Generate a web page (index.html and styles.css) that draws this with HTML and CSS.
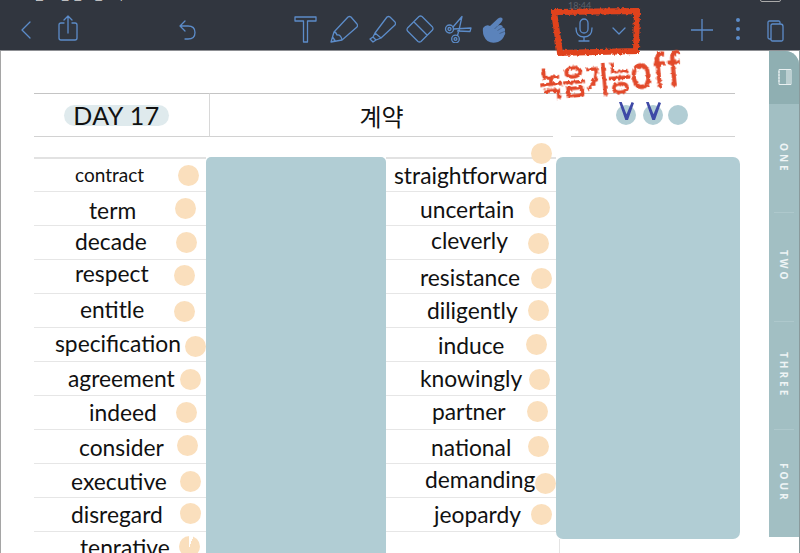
FILE: index.html
```html
<!DOCTYPE html>
<html lang="ko">
<head>
    <meta charset="UTF-8">
    <meta name="viewport" content="width=device-width, initial-scale=1.0">
    <title>DAY 17 계약</title>
    <link rel="stylesheet" href="styles.css">
</head>
<body>
    <div class="status-bar">
        <span class="status-date">9월 17일 금요일 오후</span>
        <span class="status-time">18:44</span>
        <span class="status-right">71%</span>
        <span class="status-battery"></span>
    </div>

    <header class="toolbar">
        <svg class="icon icon-back" viewBox="0 0 10 18"><path d="M9 1 1 9l8 8"/></svg>
        <svg class="icon icon-share" viewBox="0 0 20 26"><path d="M6 8H3Q1 8 1 10v13q0 2 2 2h14q2 0 2-2V10q0-2-2-2h-3M10 18V1M6 5l4-4 4 4"/></svg>
        <svg class="icon icon-undo" viewBox="0 0 17 20"><path d="M6 1 1 6l5 5M1 6h8q7 0 7 6.500T9 19H6"/></svg>

        <div class="tools">
            <svg class="icon tool" viewBox="0 0 28 28"><path d="M3 2h21v4h-8.500v21h-4V6H3z"/></svg>
            <svg class="icon tool" viewBox="0 0 28 28"><path d="M1 27 4 17 18 2q1.500-1 3 0l6 7q1 1.500 0 3L12 25zM4 17q2 0 3 3 4-.5 5 5M1 27l4-1.500L2.500 22"/></svg>
            <svg class="icon tool" viewBox="0 0 28 28"><path d="M7 18 19 2q1.500-1 3 0l5 5q1 1.500 0 3L13 23zM7 18l-2 4 3 3 5-2M5 22l-3 2 3 3 3-2"/></svg>
            <svg class="icon tool" viewBox="0 0 28 28"><path d="M1.500 13 13 1.500q1.500-1 3 0l10.500 10.500q1 1.500 0 3L15 26.500q-1.500 1-3 0L1.500 16q-1-1.500 0-3zM8 7l13 13"/></svg>
            <svg class="icon tool" viewBox="0 0 28 28"><circle cx="5.500" cy="14" r="4"/><circle cx="5.500" cy="14" r="1.500"/><circle cx="11.500" cy="24" r="3.800"/><circle cx="11.500" cy="24" r="1.400"/><path d="M9 12 18 1.500 15 15l-1.500 5.500M9.500 14 27 13l-1 3.500-12.500-.5"/></svg>
            <svg class="tool icon-hand" viewBox="0 0 28 28"><path d="M1 13Q4 9 8 11L16 3.500Q19 1.500 20.500 3.500 21 5.500 19 7.500L15.500 11Q18 9.500 20 10.500 21 11.500 20.500 12.500 23 12.500 23 15 23 16 22.500 16.500 24 18 22.500 20 21 25 16 27 10 29 5.500 26 0 21 1 13z"/><path class="hand-line" d="M15.500 11l-3 3M20.500 12.500l-5 3M22.500 16.500l-5 2"/></svg>
        </div>

        <svg class="icon icon-mic" viewBox="0 0 18 24"><rect x="5" y="1" width="8" height="14" rx="4"/><path d="M1 10q0 9 8 9t8-9M9 19v4M4 23h10"/></svg>
        <svg class="icon icon-down" viewBox="0 0 14 8"><path d="M1 1l6 6 6-6"/></svg>
        <svg class="icon icon-plus" viewBox="0 0 22 22"><path d="M11 0v22M0 11h22"/></svg>
        <div class="more-dots"><span></span><span></span><span></span></div>
        <svg class="icon icon-pages" viewBox="0 0 17 22"><path d="M13 4V2.500Q13 1 11.500 1H2.500Q1 1 1 2.500V17.500Q1 19 2.500 19H4M5.500 4h8Q16 4 16 6.500v13q0 1.500-1.500 1.500h-9Q4 21 4 19.500V5.500Q4 4 5.500 4z"/></svg>
    </header>

    <main class="page">
        <div class="day-head">
            <div class="day-cell"><span class="day-pill">DAY 17</span></div>
            <div class="title-cell">계약</div>
            <div class="head-gap"></div>
            <div class="marks-cell">
                <span class="mark"></span><span class="mark"></span><span class="mark"></span>
            </div>
        </div>

        <div class="sheet">
            <ul class="words words-left">
                <li style="--x:41px;--y:-1px;--dot-x:144px;--dot-y:6px" class="small"><span>contract</span><i></i></li>
                <li style="--x:55px;--y:1px;--dot-x:141px;--dot-y:6px"><span>term</span><i></i></li>
                <li style="--x:41px;--y:-2px;--dot-x:142px;--dot-y:6px"><span>decade</span><i></i></li>
                <li style="--x:41px;--y:-4px;--dot-x:140px;--dot-y:5px"><span>respect</span><i></i></li>
                <li style="--x:46px;--y:-2px;--dot-x:140px;--dot-y:7px"><span>entitle</span><i></i></li>
                <li style="--x:21px;--y:-2px;--dot-x:151px;--dot-y:8px"><span>specification</span><i></i></li>
                <li style="--x:34px;--y:-1px;--dot-x:146px;--dot-y:7px"><span>agreement</span><i></i></li>
                <li style="--x:55px;--y:-1px;--dot-x:142px;--dot-y:6px"><span>indeed</span><i></i></li>
                <li style="--x:45px;--y:0px;--dot-x:143px;--dot-y:5px"><span>consider</span><i></i></li>
                <li style="--x:37px;--y:0px;--dot-x:146px;--dot-y:7px"><span>executive</span><i></i></li>
                <li style="--x:37px;--y:-1px;--dot-x:146px;--dot-y:5px"><span>disregard</span><i></i></li>
                <li style="--x:46px;--y:-2px;--dot-x:145px;--dot-y:4px"><span>tenrative</span><i class="dot-loading"></i></li>
            </ul>
            <div class="answer-panel panel-long"></div>
            <ul class="words words-right">
                <li style="--x:8px;--y:-1px;--dot-x:145px;--dot-y:-16px"><span>straightforward</span><i></i></li>
                <li style="--x:34px;--y:0px;--dot-x:143px;--dot-y:5px"><span>uncertain</span><i></i></li>
                <li style="--x:45px;--y:-3px;--dot-x:142px;--dot-y:7px"><span>cleverly</span><i></i></li>
                <li style="--x:34px;--y:0px;--dot-x:145px;--dot-y:8px"><span>resistance</span><i></i></li>
                <li style="--x:41px;--y:-1px;--dot-x:142px;--dot-y:6px"><span>diligently</span><i></i></li>
                <li style="--x:52px;--y:0px;--dot-x:140px;--dot-y:6px"><span>induce</span><i></i></li>
                <li style="--x:34px;--y:-1px;--dot-x:143px;--dot-y:7px"><span>knowingly</span><i></i></li>
                <li style="--x:46px;--y:-2px;--dot-x:141px;--dot-y:5px"><span>partner</span><i></i></li>
                <li style="--x:45px;--y:0px;--dot-x:142px;--dot-y:6px"><span>national</span><i></i></li>
                <li style="--x:39px;--y:-2px;--dot-x:149px;--dot-y:9px"><span>demanding</span><i></i></li>
                <li style="--x:48px;--y:-1px;--dot-x:145px;--dot-y:6px"><span>jeopardy</span><i></i></li>
            </ul>
            <div class="answer-panel panel-short"></div>
        </div>

        <nav class="side-tabs">
            <div class="tab-cover">
                <svg viewBox="0 0 15 16"><path d="M2 .5h12v15H2zM10 .5v15M12 .5v15M1 3h2M1 6h2M1 9h2M1 12h2"/></svg>
            </div>
            <div class="tab"><span>ONE</span></div>
            <div class="tab"><span>TWO</span></div>
            <div class="tab"><span>THREE</span></div>
            <div class="tab"><span>FOUR</span></div>
        </nav>
    </main>

    <!-- 빨간 펜 메모 -->
    <svg class="rough-defs" width="0" height="0">
        <filter id="rough" x="-10%" y="-10%" width="120%" height="120%">
            <feTurbulence type="fractalNoise" baseFrequency="0.35" numOctaves="2" seed="4"/>
            <feDisplacementMap in="SourceGraphic" scale="3.500"/>
        </filter>
    </svg>
    <svg class="scribble-box" viewBox="0 0 90 50"><path d="M3 4 86 3 85 43 9 45Q6 25 3 4z"/></svg>
    <div class="scribble-note">녹음기능<b>off</b></div>
</body>
</html>
```

FILE: styles.css
```css
* {
    box-sizing: border-box;
}

body {
    font-family: "Lato", "Noto Sans CJK KR", sans-serif;
    margin: 0;
    height: 553px;
    overflow: hidden;
    position: relative;
    background: #fff;
    color: #111;
}

/* Status bar, cut off by the top of the screenshot */
.status-bar {
    position: absolute;
    top: 0;
    left: 0;
    width: 100%;
    height: 10px;
    overflow: hidden;
    font-size: 11px;
    color: #d8d8d8;
    z-index: 2;
}

.status-date {
    position: absolute;
    left: 28px;
    top: -13px;
    font-family: "Noto Sans CJK KR", sans-serif;
}

.status-time {
    position: absolute;
    left: 568px;
    top: 1px;
    font-size: 9px;
    line-height: 9px;
    color: #5a606b;
}

.status-right {
    position: absolute;
    left: 735px;
    top: -12px;
}

.status-battery {
    position: absolute;
    left: 760px;
    top: -8px;
    width: 21px;
    height: 10px;
    border: 1px solid #aaa;
    border-radius: 2px;
}

/* Toolbar */
.toolbar {
    height: 51px;
    background: #31363f;
    border-bottom: 1px solid #8d8f93;
    display: flex;
    align-items: center;
    position: relative;
}

.icon {
    fill: none;
    stroke: #5c8cc9;
    stroke-width: 1.300;
    stroke-linecap: round;
    stroke-linejoin: round;
    flex: none;
}

.icon-back {
    width: 10px;
    height: 18px;
    margin: 10px 0 0 21px;
}

.icon-share {
    width: 20px;
    height: 26px;
    margin: 5px 0 0 27px;
}

.icon-undo {
    width: 17px;
    height: 20px;
    margin: 9px 0 0 101px;
}

.tools {
    display: flex;
    gap: 10px;
    margin: 8px 0 0 96px;
}

.tool {
    width: 28px;
    height: 28px;
}

.icon-hand {
    fill: #5b83bb;
}

.hand-line {
    fill: none;
    stroke: #3f5a80;
    stroke-width: 0.800;
}

.icon-mic {
    width: 18px;
    height: 24px;
    margin: 9px 0 0 65px;
}

.icon-down {
    width: 14px;
    height: 8px;
    margin: 11px 0 0 19px;
}

.icon-plus {
    width: 22px;
    height: 22px;
    margin: 9px 0 0 65px;
}

.more-dots {
    display: flex;
    flex-direction: column;
    gap: 5px;
    margin: 8px 0 0 23px;
}

.more-dots span {
    width: 4px;
    height: 4px;
    border-radius: 50%;
    background: #5c8cc9;
}

.icon-pages {
    width: 17px;
    height: 22px;
    margin: 11px 0 0 27px;
}

/* Page */
.page {
    position: relative;
    height: 502px;
    padding: 42px 0 0 34px;
    border-left: 1px solid #a5a5a5;
    border-right: 1px solid #8a9a9c;
}

.day-head {
    display: flex;
    height: 44px;
    width: 701px;
    margin-left: -1px;
}

.day-cell,
.title-cell,
.marks-cell {
    display: flex;
    align-items: center;
    border-top: 1px solid #c4c4c4;
    border-bottom: 1px solid #d2d2d2;
}

.day-cell {
    width: 176px;
    padding-left: 30px;
    border-right: 1px solid #d8d8d8;
}

.day-pill {
    width: 105px;
    height: 21px;
    border-radius: 11px;
    background: #dfeaed;
    font-size: 25px;
    line-height: 21px;
    text-align: center;
    letter-spacing: 0.5px;
}

.title-cell {
    width: 343px;
    justify-content: center;
    font-size: 24px;
}

.head-gap {
    width: 18px;
    border-top: 1px solid #c4c4c4;
}

.marks-cell {
    flex: 1;
    gap: 7px;
    padding-left: 45px;
}

.mark {
    position: relative;
    width: 20px;
    height: 20px;
    border-radius: 50%;
    background: #b1cdd4;
}

.mark:nth-child(3) {
    margin-left: -2px;
}

/* the pen ticks sit above the first two circles */
.mark:nth-child(-n+2)::after {
    content: "";
    position: absolute;
    left: 3px;
    top: -3px;
    width: 15px;
    height: 18px;
    background: #3e49a6;
    clip-path: polygon(0 0, 18% 0, 50% 68%, 84% 0, 100% 6%, 60% 100%, 42% 100%);
}

.sheet {
    display: flex;
    align-items: flex-start;
    margin: 20px 0 0 -1px;
}

.words {
    list-style: none;
    margin: 0;
    padding: 0;
    position: relative;
    border-top: 2px solid #e2e2e2;
    font-size: 22.800px;
}

.words-left {
    width: 172px;
}

.words-right {
    width: 170px;
}

.words li {
    position: relative;
    height: 34px;
    border-bottom: 1px solid #e6e6e6;
    line-height: 34px;
    white-space: nowrap;
}

.words li:first-child {
    height: 33px;
}

.words span {
    position: relative;
    left: var(--x);
    top: var(--y);
    z-index: 1;
}

.words .small {
    font-size: 19px;
}

/* Stickers dropped on the sheet */
.words li i {
    position: absolute;
    left: var(--dot-x);
    top: var(--dot-y);
    width: 21px;
    height: 21px;
    border-radius: 50%;
    background: #fadfbd;
}

.words li .dot-loading {
    background: conic-gradient(#fff 0 6%, #fadfbd 6% 100%);
}

.answer-panel {
    flex: none;
    background: #b1cdd4;
    position: relative;
    z-index: 2;
}

.panel-long {
    width: 180px;
    height: 420px;
    border-radius: 5px 5px 0 0;
}

.panel-short {
    width: 184px;
    height: 382px;
    border-radius: 7px;
}

.panel-short::after {
    content: "";
    position: absolute;
    left: 3px;
    top: 382px;
    width: 1px;
    height: 20px;
    background: #e4e4e4;
}

/* Side tabs */
.side-tabs {
    position: absolute;
    top: 0;
    right: 0;
    width: 30px;
    height: 486px;
    display: flex;
    flex-direction: column;
    background: #a2bfc3;
    border-radius: 0 14px 0 0;
    z-index: 3;
}

.tab-cover {
    height: 53px;
    background: #8fafb2;
    border-radius: 0 14px 0 0;
    display: flex;
    align-items: center;
    justify-content: center;
    padding-bottom: 1px;
}

.tab-cover svg {
    width: 15px;
    height: 16px;
    fill: none;
    stroke: #e9f0f1;
    stroke-width: 1;
}

.tab {
    flex: 1;
    display: flex;
    align-items: center;
    justify-content: center;
    position: relative;
}

.tab + .tab::before {
    content: "";
    position: absolute;
    top: 0;
    left: 5px;
    right: 5px;
    height: 1px;
    background: #aec8cc;
}

.tab span {
    writing-mode: vertical-rl;
    font-family: "Open Sans", sans-serif;
    font-size: 10px;
    font-weight: 700;
    letter-spacing: 3px;
    color: #eef4f5;
}

/* Red pen note */
.rough-defs {
    position: absolute;
}

.scribble-box {
    position: absolute;
    left: 551px;
    top: 8px;
    width: 90px;
    height: 50px;
    fill: none;
    stroke: #e0431f;
    stroke-width: 6;
    filter: url(#rough);
    z-index: 4;
}

.scribble-note {
    position: absolute;
    left: 539px;
    top: 60px;
    font-family: "Noto Sans CJK KR", sans-serif;
    font-size: 26px;
    line-height: 40px;
    font-weight: 700;
    letter-spacing: -1px;
    color: #e2492a;
    transform: rotate(-5deg) scaleY(1.300);
    transform-origin: left center;
    filter: url(#rough);
    white-space: nowrap;
    z-index: 4;
}

.scribble-note b {
    font-family: "Lato", sans-serif;
    font-size: 37px;
    font-weight: 400;
    letter-spacing: 2px;
    -webkit-text-stroke: 0.800px #e2492a;
}
```
